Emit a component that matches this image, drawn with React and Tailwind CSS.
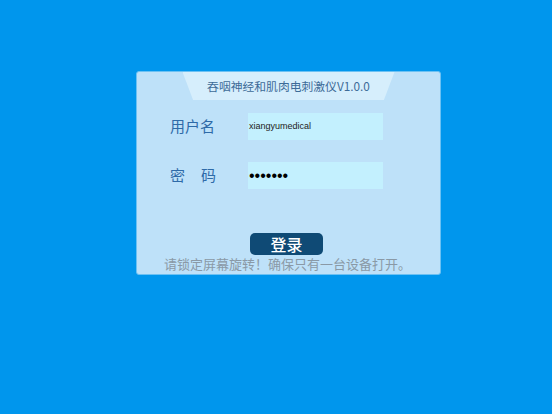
import React from "react";

const App = () => {
  return (
    <div
      className="w-[552px] h-[414px] bg-[#0096ed] pl-[136px] pt-[71px] overflow-hidden"
      style={{ fontFamily: '"Noto Sans CJK SC", "Noto Sans", sans-serif' }}
    >
      <div className="w-[305px] h-[204px] bg-[#bee1f9] border border-[#6cc1f3] rounded-[3px] flex flex-col">
        <div className="mx-auto w-[212px] h-[28px] bg-[#d6eefc] [clip-path:polygon(0_0,100%_0,95%_100%,5%_100%)] flex items-center justify-center text-[11.8px] text-[#3d6b98]">
          吞咽神经和肌肉电刺激仪V1.0.0
        </div>
        <div className="flex items-center mt-[13px] h-[27px]">
          <div className="w-[111px] pl-[33px] text-[15px] text-[#2e6aa8]">用户名</div>
          <div className="w-[135px] h-[27px] bg-[#c3f0fe] flex items-center pl-[1px] text-[9px] text-[#222] font-['Liberation_Sans']">
            xiangyumedical
          </div>
        </div>
        <div className="flex items-center mt-[22px] h-[27px]">
          <div className="w-[111px] pl-[33px] text-[15px] text-[#2e6aa8] flex gap-[16px]">
            <span>密</span>
            <span>码</span>
          </div>
          <div className="w-[135px] h-[27px] bg-[#c3f0fe] flex items-center pl-[1px] text-[16px] text-black font-['Liberation_Sans']">
            •••••••
          </div>
        </div>
        <div className="mt-[44px] ml-[113px] w-[73px] h-[22px] bg-[#0f4a75] rounded-[5px] flex items-center justify-center text-[16px] font-medium text-white">
          登录
        </div>
        <div className="text-center text-[13px] text-[#8a99a6] leading-[15px] mt-[1px] translate-x-[-1px]">
          请锁定屏幕旋转！确保只有一台设备打开。
        </div>
      </div>
    </div>
  );
};

export default App;
